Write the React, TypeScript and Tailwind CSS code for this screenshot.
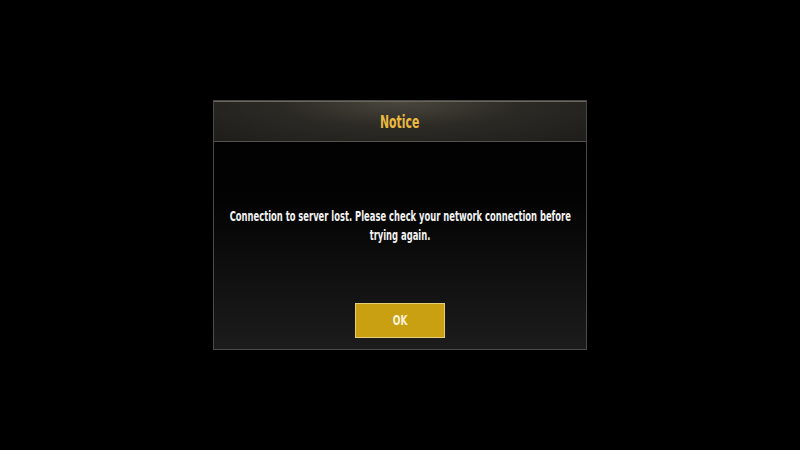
export default function App() {
  return (
    <main className="flex h-[450px] w-[800px] items-start justify-center bg-black pt-[100px] font-['DejaVu_Sans_Condensed','DejaVu_Sans',sans-serif]">
      <div className="flex h-[250px] w-[374px] flex-col border border-[#4a4a48] bg-[linear-gradient(180deg,#000000_0%,#030303_40%,#1c1c1c_100%)]">
        <header className="flex h-[41px] items-center justify-center border-t border-b border-t-[#6a665e] border-b-[#55524c] bg-[radial-gradient(ellipse_at_50%_0%,#4a463d_0%,#2c2a25_45%,#1e1d1a_100%)]">
          <h1 className="mt-[3px] scale-x-[0.71] text-[17px] font-bold text-[#eab940]">Notice</h1>
        </header>
        <div className="flex flex-1 flex-col items-center">
          <p className="mt-[65px] flex flex-col items-center text-center text-[13.5px] leading-[19px] font-bold text-[#f2f2f2]">
            <span className="scale-x-[0.69] whitespace-nowrap">
              Connection to server lost. Please check your network connection before
            </span>
            <span className="scale-x-[0.69] whitespace-nowrap">trying again.</span>
          </p>
          <button className="mt-[58px] h-[35px] w-[90px] border border-[#e6cf7a] bg-[#c9a011] text-[14px] font-bold text-[#fbf3d8]">
            <span className="inline-block scale-x-[0.72]">OK</span>
          </button>
        </div>
      </div>
    </main>
  );
}
